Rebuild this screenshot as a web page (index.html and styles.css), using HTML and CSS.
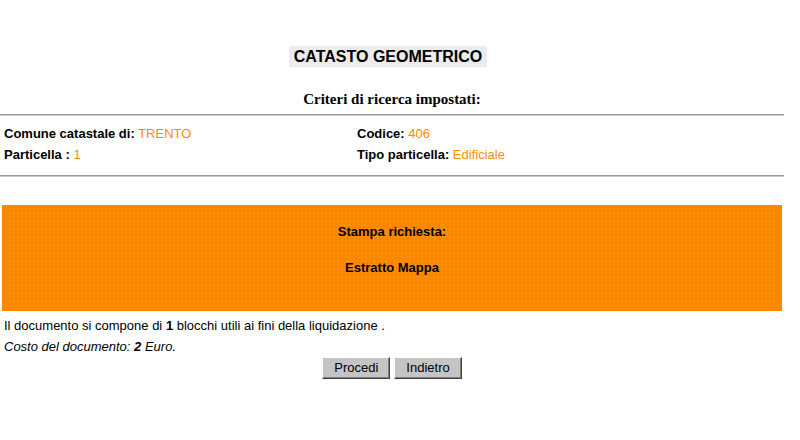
FILE: index.html
```html
<!DOCTYPE html>
<html>
<head>
<meta charset="utf-8">
<link rel="stylesheet" href="styles.css">
</head>
<body>
<div class="page">
  <div class="title-wrap"><span class="title">CATASTO GEOMETRICO</span></div>
  <div class="subtitle">Criteri di ricerca impostati:</div>
  <hr class="rule">
  <div class="criteria">
    <div class="cell"><b>Comune catastale di:</b> <span class="val">TRENTO</span></div>
    <div class="cell"><b>Codice:</b> <span class="val">406</span></div>
    <div class="cell"><b>Particella :</b> <span class="val">1</span></div>
    <div class="cell"><b>Tipo particella:</b> <span class="val">Edificiale</span></div>
  </div>
  <hr class="rule">
  <div class="request">
    <div class="req-line">Stampa richiesta:</div>
    <div class="req-line">Estratto Mappa</div>
  </div>
  <div class="info">Il documento si compone di <b>1</b> blocchi utili ai fini della liquidazione .</div>
  <div class="info cost">Costo del documento: <b>2</b> Euro.</div>
  <div class="actions">
    <button class="btn" type="button">Procedi</button>
    <button class="btn" type="button">Indietro</button>
  </div>
</div>
</body>
</html>
```
FILE: styles.css
```css
html, body {
  margin: 0;
  padding: 0;
  background: #ffffff;
}
.page {
  width: 784px;
  font-family: "Liberation Sans", Arial, sans-serif;
  color: #000;
}
.title-wrap {
  text-align: center;
  padding-top: 46px;
  padding-right: 8px;
}
.title {
  display: inline-block;
  background: #ececec;
  font-weight: bold;
  font-size: 16px;
  line-height: 21px;
  padding: 0 5px;
}
.subtitle {
  text-align: center;
  font-family: "Liberation Serif", "Times New Roman", serif;
  font-weight: bold;
  font-size: 15px;
  line-height: 18px;
  margin-top: 23px;
}
.rule {
  margin: 6px 0 0 0;
  border: 0;
  border-top: 1px solid #9a9a9a;
  border-bottom: 1px solid #c8c8c8;
  height: 0;
}
.criteria {
  display: grid;
  grid-template-columns: 353px 1fr;
  row-gap: 7px;
  padding: 11px 0 7px 4px;
  font-size: 13px;
  line-height: 14px;
}
.val {
  color: #ff8c00;
}
.request {
  margin: 28px 2px 0 2px;
  height: 106px;
  background: #fd8b02;
  background-image: radial-gradient(rgba(230,120,0,0.35) 1px, transparent 1px);
  background-size: 4px 4px;
  text-align: center;
  font-weight: bold;
  font-size: 13px;
  box-sizing: border-box;
  padding-top: 19px;
}
.req-line {
  line-height: 15px;
}
.req-line + .req-line {
  margin-top: 21px;
}
.info {
  font-size: 13px;
  line-height: 15px;
  padding-left: 4px;
  margin-top: 7px;
}
.cost {
  font-style: italic;
  margin-top: 6px;
}
.actions {
  text-align: center;
  margin-top: 3px;
  font-size: 0;
}
.btn {
  font-family: "Liberation Sans", Arial, sans-serif;
  font-size: 13px;
  background: #c4c4c4;
  border: 1px solid;
  border-color: #ffffff #404040 #404040 #ffffff;
  box-shadow: inset -1px -1px 0 #808080;
  padding: 0 11px;
  height: 22px;
  line-height: 18px;
  margin: 0 2px;
  color: #000;
}
```
